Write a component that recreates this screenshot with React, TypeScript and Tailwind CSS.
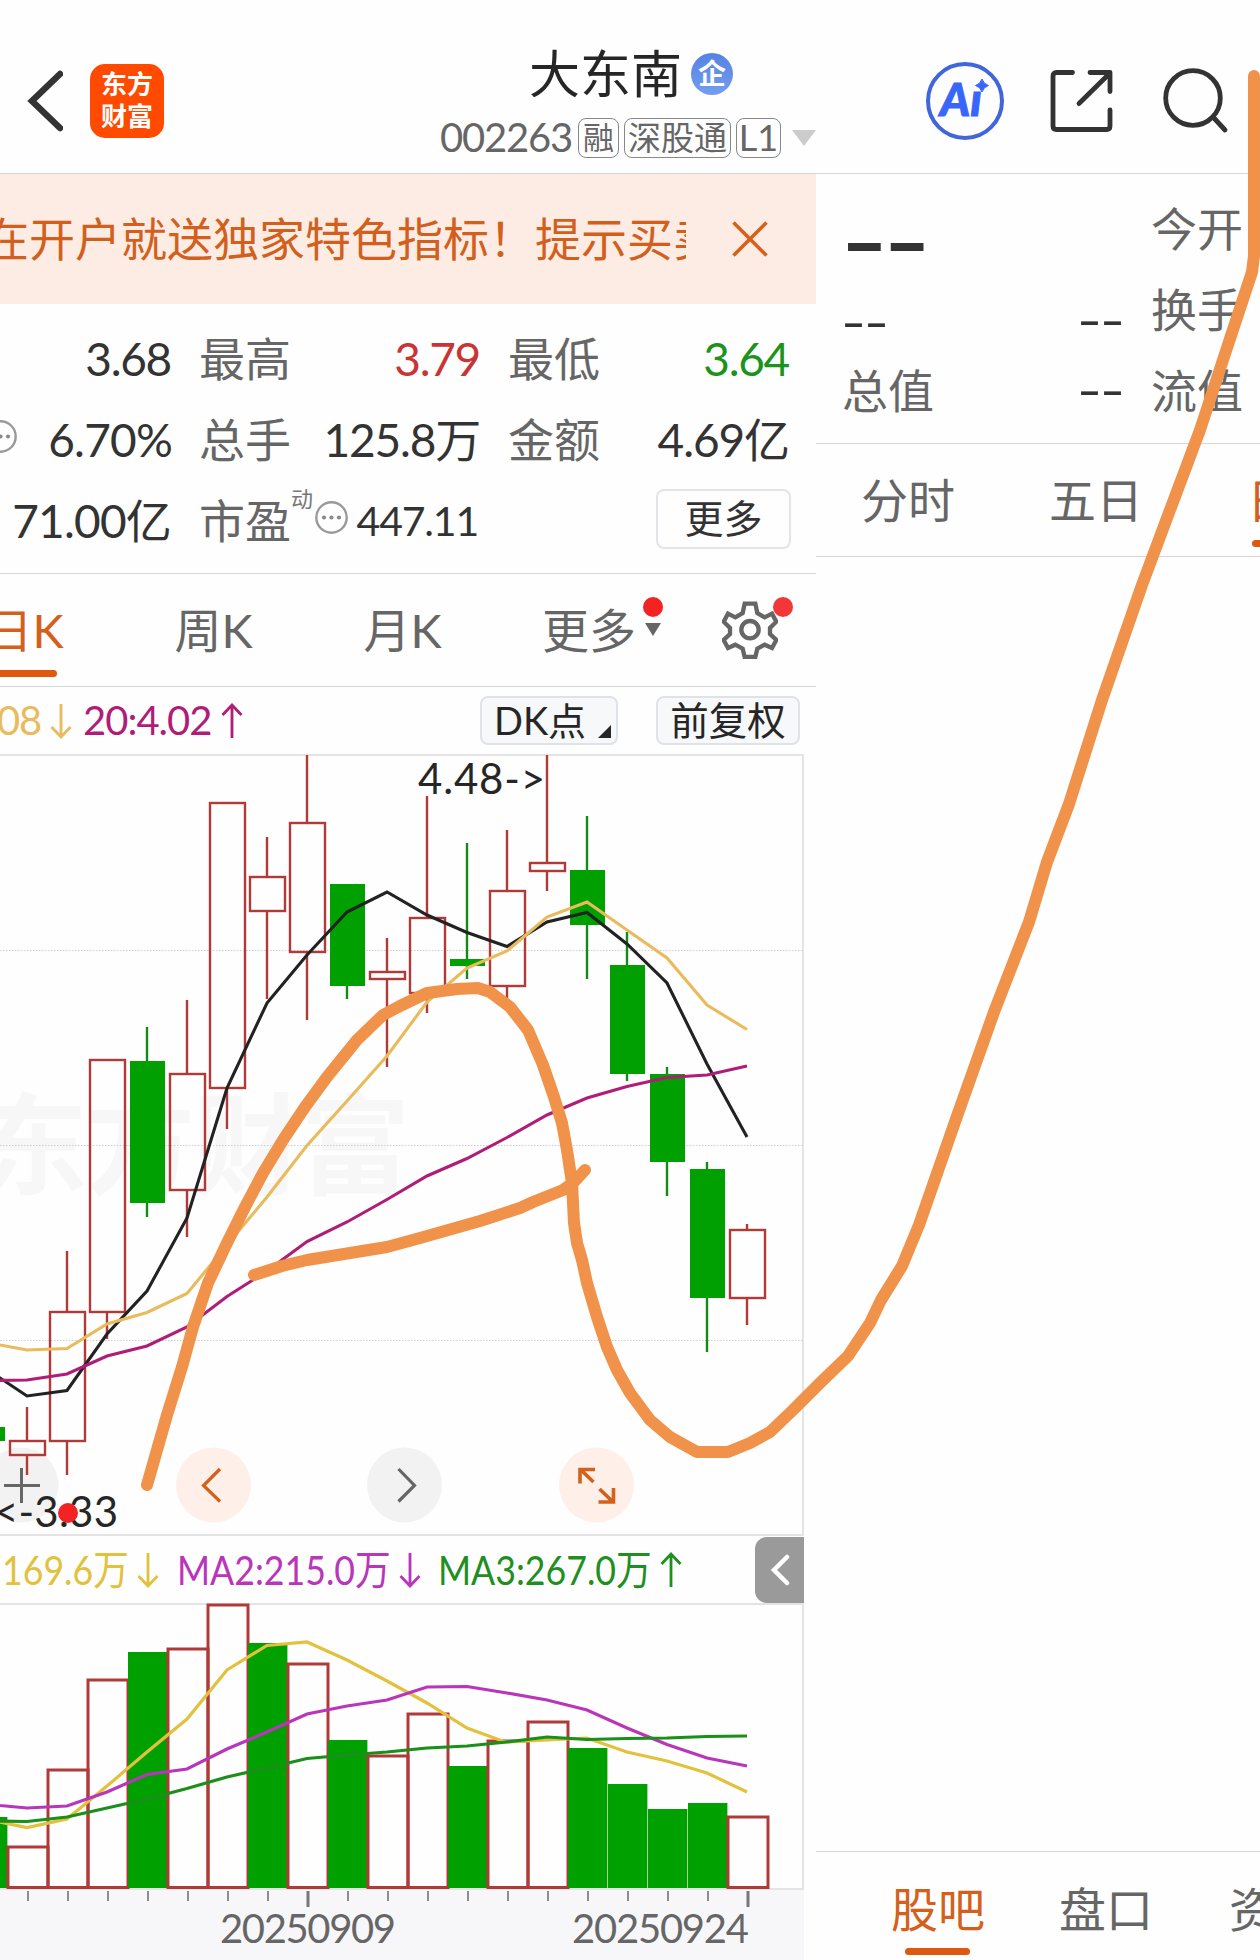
import React from "react";

type Candle = {
  x: number;
  up: boolean;
  high: number;
  top: number;
  bottom: number;
  low: number;
};

const candles: Candle[] = [
  { x: -13, up: false, high: 1427, top: 1427, bottom: 1441, low: 1441 },
  { x: 27, up: true, high: 1407, top: 1441, bottom: 1455, low: 1475 },
  { x: 67, up: true, high: 1251, top: 1312, bottom: 1441, low: 1475 },
  { x: 107, up: true, high: 1060, top: 1060, bottom: 1312, low: 1339 },
  { x: 147, up: false, high: 1027, top: 1061, bottom: 1203, low: 1217 },
  { x: 187, up: true, high: 1000, top: 1074, bottom: 1190, low: 1237 },
  { x: 227, up: true, high: 803, top: 803, bottom: 1088, low: 1129 },
  { x: 267, up: true, high: 837, top: 877, bottom: 911, low: 999 },
  { x: 307, up: true, high: 755, top: 823, bottom: 952, low: 1020 },
  { x: 347, up: false, high: 884, top: 884, bottom: 986, low: 999 },
  { x: 387, up: true, high: 938, top: 972, bottom: 979, low: 1067 },
  { x: 427, up: true, high: 796, top: 918, bottom: 993, low: 1013 },
  { x: 467, up: false, high: 843, top: 959, bottom: 966, low: 979 },
  { x: 507, up: true, high: 830, top: 891, bottom: 986, low: 1000 },
  { x: 547, up: true, high: 755, top: 863, bottom: 871, low: 891 },
  { x: 587, up: false, high: 816, top: 870, bottom: 925, low: 979 },
  { x: 627, up: false, high: 932, top: 965, bottom: 1074, low: 1081 },
  { x: 667, up: false, high: 1067, top: 1074, bottom: 1162, low: 1196 },
  { x: 707, up: false, high: 1162, top: 1169, bottom: 1298, low: 1352 },
  { x: 747, up: true, high: 1224, top: 1230, bottom: 1298, low: 1325 },
];

const ma5 =
  "-13,1370 0,1378 27,1396 67,1390.5 107,1334 147,1291 187,1218 227,1088 267,1003 307,955 347,912 387,892 427,915 467,932.5 507,946.5 547,922 587,912.5 627,944 667,983 707,1064 747,1137";
const ma10 =
  "-13,1342 0,1345 27,1350 67,1348.5 107,1324 147,1312.5 187,1293.5 227,1245 267,1197 307,1145.5 347,1101 387,1056 427,1002 467,968 507,951 547,917 587,902 627,930 667,958 707,1005 747,1029.5";
const ma20 =
  "-13,1380.5 27,1380 67,1374 107,1356 147,1346 187,1327 227,1296.5 267,1271 307,1241.5 347,1222 387,1199.5 427,1176 467,1158.5 507,1137.5 547,1115 587,1098 627,1086.5 667,1077.5 707,1075 747,1066";

const volumes = [
  { x: -13, up: false, top: 1817 },
  { x: 27, up: true, top: 1847 },
  { x: 67, up: true, top: 1770 },
  { x: 107, up: true, top: 1680 },
  { x: 147, up: false, top: 1652 },
  { x: 187, up: true, top: 1649 },
  { x: 227, up: true, top: 1605 },
  { x: 267, up: false, top: 1643 },
  { x: 307, up: true, top: 1664 },
  { x: 347, up: false, top: 1740 },
  { x: 387, up: true, top: 1756 },
  { x: 427, up: true, top: 1714 },
  { x: 467, up: false, top: 1766 },
  { x: 507, up: true, top: 1741 },
  { x: 547, up: true, top: 1722 },
  { x: 587, up: false, top: 1748 },
  { x: 627, up: false, top: 1784 },
  { x: 667, up: false, top: 1809 },
  { x: 707, up: false, top: 1803 },
  { x: 747, up: true, top: 1817 },
];

const vol5 =
  "-13,1819 0,1822 27,1827.5 67,1819 107,1786 147,1752 187,1719 227,1670 267,1645.5 307,1642 347,1660 387,1681 427,1703 467,1728 505,1742 547,1740 587,1738 627,1752 667,1761 707,1773 747,1792";
const vol10 =
  "-13,1804 0,1805.5 27,1808 67,1806 107,1792 147,1774.5 187,1769 227,1749 267,1732 307,1714 347,1706 387,1700 427,1687 467,1686.5 507,1693 547,1700 587,1710 627,1728 667,1744.5 707,1758 747,1766";
const vol20 =
  "-13,1821 27,1821.5 67,1817 107,1808 147,1799 187,1788.5 227,1777 267,1768 307,1758.5 347,1755 387,1752 427,1748 467,1746 507,1742 547,1737 587,1739.5 627,1738.5 667,1738 707,1736.5 747,1736";

const mainStroke =
  "147,1485 167,1415 182,1367 193,1327 208,1283 227,1243 245,1207 263,1173 283,1140 305,1107 327,1077 357,1040 383,1015 400,1006 427,993 457,989 478,988 490,992 510,1007 528,1030 543,1065 554,1097 562,1123 567,1150 572,1183 574,1223 577,1243 582,1260 587,1283 597,1317 607,1347 617,1370 630,1393 650,1420 670,1437 697,1452 728,1452 750,1443 770,1432 793,1410 820,1383 848,1356 870,1323 881,1300 902,1266 919,1225 956,1119 994,1012 1029,922 1047,862 1069,804 1102,700 1142,585 1170,510 1200,430 1222,363 1252,272 1254,256 1254,76";
const trendStroke =
  "254,1275 282,1266 307,1260 387,1247 420,1238 480,1221 520,1208 533,1202 563,1190 573,1183 585,1170";

function Arrow({ up }: { up?: boolean }) {
  return (
    <svg width="22" height="36" viewBox="0 0 22 36" fill="none" stroke="currentColor" strokeWidth="2.800" className="shrink-0">
      {up ? <path d="M11 35V2M1.5 12L11 2l9.5 10" /> : <path d="M11 1v33M1.5 24L11 34l9.5-10" />}
    </svg>
  );
}

function Dots() {
  return (
    <svg width="33" height="33" viewBox="0 0 33 33" className="shrink-0">
      <circle cx="16.5" cy="16.5" r="15.2" fill="none" stroke="#999" strokeWidth="2.400" />
      <g fill="#8a8a8a">
        <circle cx="9" cy="16.5" r="2.1" />
        <circle cx="16.5" cy="16.5" r="2.1" />
        <circle cx="24" cy="16.5" r="2.1" />
      </g>
    </svg>
  );
}

function Header() {
  return (
    <header className="flex h-[174px] shrink-0 border-b border-[#d6d6d6]">
      <svg width="36" height="62" viewBox="0 0 36 62" className="ml-[27px] mt-[70px] shrink-0" fill="none" stroke="#333" strokeWidth="6.500">
        <path d="M33 4L5 31l28 27" strokeLinecap="round" />
      </svg>
      <div className="ml-[27px] mt-[64px] h-[74px] w-[74px] shrink-0 rounded-[15px] bg-[#ff4a00] pt-[4px] text-center text-[26px] font-bold leading-[32px] text-white">
        <div>东方</div>
        <div>财富</div>
      </div>

      <div className="ml-[276px] mt-[40px] w-[378px] shrink-0">
        <div className="flex h-[68px] items-center pl-[89px]">
          <span className="text-[51px] leading-[66px] text-[#262626]">大东南</span>
          <span className="ml-[9px] h-[42px] w-[42px] rounded-full bg-gradient-to-b from-[#5583e3] to-[#749df0] text-center text-[28px] font-bold leading-[41px] text-white">
            企
          </span>
        </div>
        <div className="mt-[9px] flex h-[41px] items-center text-[#666]">
          <span className="w-[138px] text-[40px] leading-[41px] tracking-[-1.2px]">002263</span>
          <span className="h-[40px] w-[41px] rounded-[8px] border-[1.5px] border-[#888] text-center text-[31px] leading-[36px]">融</span>
          <span className="ml-[5px] h-[40px] w-[107px] rounded-[8px] border-[1.5px] border-[#888] text-center text-[33px] leading-[36px]">深股通</span>
          <span className="ml-[5px] h-[40px] w-[45px] rounded-[8px] border-[1.5px] border-[#888] text-center text-[36px] leading-[36px]">L1</span>
          <svg width="24" height="16" className="ml-[11px] shrink-0">
            <path d="M0 0h24L12 16z" fill="#ccc" />
          </svg>
        </div>
      </div>

      <div className="relative ml-[107px] mt-[61px] h-[80px] w-[80px] shrink-0">
        <svg width="80" height="80" className="absolute inset-0">
          <circle cx="40" cy="40" r="37" fill="none" stroke="#4166dc" strokeWidth="4" />
          <path d="M57 18q1.500 5 6.500 6.500q-5 1.500-6.500 6.500q-1.500-5-6.500-6.500q5-1.500 6.500-6.500z" fill="#3866fa" stroke="#3866fa" />
        </svg>
        <span className="absolute left-[15px] top-[12px] text-[46px] font-black italic leading-[52px] text-[#3866fa] [-webkit-text-stroke:1px_#3866fa]">Aı</span>
      </div>
      <svg width="66" height="66" viewBox="0 0 66 66" className="ml-[43px] mt-[68px] shrink-0" fill="none" stroke="#333" strokeWidth="4.800" strokeLinecap="round" strokeLinejoin="round">
        <path d="M24.500 4.500H8.500Q5 4.500 5 8v50q0 3.500 3.500 3.500h50q3.500 0 3.500-3.500V42M42 4.500h20v19M61 6L31 35.500" />
      </svg>
      <svg width="70" height="70" viewBox="0 0 70 70" className="ml-[46px] mt-[66px] shrink-0" fill="none" stroke="#333" strokeWidth="4.800" strokeLinecap="round">
        <circle cx="33" cy="32" r="27.300" />
        <path d="M53 51l12 13" />
      </svg>
    </header>
  );
}

function Stats() {
  return (
    <section className="h-[270px] shrink-0 border-b border-[#d6d6d6] pt-[14px] text-[46px] leading-[81px] text-[#333]">
      <div className="flex h-[81px] whitespace-nowrap">
        <span className="w-[171px] text-right tracking-[-1.3px]">3.68</span>
        <span className="ml-[28px] text-[#666]">最高</span>
        <span className="w-[189px] text-right tracking-[-1.3px] text-[#c93434]">3.79</span>
        <span className="ml-[28px] text-[#666]">最低</span>
        <span className="w-[189px] text-right tracking-[-1.3px] text-[#1c931c]">3.64</span>
      </div>
      <div className="flex h-[81px] whitespace-nowrap">
        <span className="-ml-[16px] mt-[21px] w-[33px]">
          <Dots />
        </span>
        <span className="w-[155px] text-right tracking-[-0.8px]">6.70%</span>
        <span className="ml-[27px] text-[#666]">总手</span>
        <span className="w-[189px] text-right tracking-[-1.2px]">125.8万</span>
        <span className="ml-[28px] text-[#666]">金额</span>
        <span className="w-[189px] text-right tracking-[-1.1px]">4.69亿</span>
      </div>
      <div className="flex h-[81px] whitespace-nowrap">
        <span className="w-[171px] text-right tracking-[-0.8px]">71.00亿</span>
        <span className="ml-[28px] text-[#666]">市盈</span>
        <span className="-mt-[22px] w-[24px] text-[22px] text-[#777]">动</span>
        <span className="mt-[21px] w-[33px]">
          <Dots />
        </span>
        <span className="w-[130px] text-right text-[41px] tracking-[-1.2px]">447.11</span>
        <span className="ml-[178px] mt-[9px] h-[60px] w-[135px] rounded-[8px] border-2 border-[#e3e4e8] text-center text-[39px] leading-[54px]">
          更多
        </span>
      </div>
    </section>
  );
}

function PeriodTabs() {
  return (
    <nav className="flex h-[113px] shrink-0 border-b border-[#d6d6d6] text-[47px] leading-[113px] text-[#666]">
      <div className="relative -ml-[70px] w-[189px] shrink-0 text-center text-[#d4601c]">
        日K
        <span className="absolute left-[62px] top-[96px] h-[7px] w-[65px] rounded-full bg-[#de590f]" />
      </div>
      <div className="w-[189px] shrink-0 text-center">周K</div>
      <div className="w-[189px] shrink-0 text-center">月K</div>
      <div className="relative w-[189px] shrink-0 pl-[45px]">
        更多
        <span className="absolute left-[146px] top-[23px] h-[20px] w-[20px] rounded-full bg-[#f32323]" />
        <svg width="16" height="13" className="absolute left-[148px] top-[49px]">
          <path d="M0 0h16L8 13z" fill="#666" />
        </svg>
      </div>
      <div className="relative w-[130px]">
        <svg width="56" height="58" viewBox="906 904 168 174" className="absolute left-[36px] top-[27px]" fill="none" stroke="#666" strokeWidth="13">
          <path d="M974 912h32l6 28 22 13 22-11 13 24-19 19v18l19 18-13 24-22-10-22 12-6 25h-32l-6-25-22-12-22 10-13-24 19-18v-18l-19-19 13-24 22 11 22-13z" />
          <circle cx="990" cy="990" r="26" />
        </svg>
        <span className="absolute left-[87px] top-[23px] h-[20px] w-[20px] rounded-full bg-[#f33636]" />
      </div>
    </nav>
  );
}

function PriceLegend() {
  return (
    <div className="flex h-[67px] shrink-0 items-center text-[40px] leading-[67px]">
      <span className="flex items-center text-[#e9bb5c]">
        <span className="-ml-[3px] w-[53px] tracking-[-1.2px]">08</span>
        <Arrow />
      </span>
      <span className="ml-[11px] flex items-center text-[#b01d78]">
        <span className="w-[138px] tracking-[-1px]">20:4.02</span>
        <Arrow up />
      </span>
      <span className="relative ml-[237px] h-[49px] w-[138px] rounded-[8px] border-2 border-[#dfe2e6] bg-[#f7f8fa] pl-[12px] text-[38px] leading-[45px] text-[#262626]">
        DK点
        <svg width="13" height="13" className="absolute bottom-[5px] right-[5px]">
          <path d="M13 0v13H0z" fill="#262626" />
        </svg>
      </span>
      <span className="ml-[38px] h-[49px] w-[144px] rounded-[8px] border-2 border-[#dfe2e6] bg-[#f7f8fa] text-center text-[38.500px] leading-[44px] text-[#262626]">
        前复权
      </span>
    </div>
  );
}

function PriceChart() {
  return (
    <svg width="804" height="782" viewBox="0 754 804 782" className="block shrink-0">
      <text x="-22" y="1186" fontSize="110" fontWeight="700" fill="#f7f7f7" textLength="432">东方财富</text>
      <path d="M0 755h803v780H0" fill="none" stroke="#e4e4e4" strokeWidth="2" />
      <path d="M0 950.500h804M0 1145.500h804M0 1340.500h804" stroke="#cfcfcf" strokeDasharray="1.500 1.500" />

      <circle cx="21" cy="1485" r="37.500" fill="#f2f2f2" />
      <path d="M4 1485.500h36M21.500 1468v35" stroke="#666" strokeWidth="3" />
      <circle cx="213.500" cy="1485" r="37.500" fill="#fef0e8" />
      <path d="M220 1469l-16.500 16.500 16.500 16" fill="none" stroke="#d4601c" strokeWidth="3.200" />
      <circle cx="404.500" cy="1485" r="37.500" fill="#f2f2f2" />
      <path d="M398.500 1469l16 16.500-16 16" fill="none" stroke="#666" strokeWidth="3.200" />
      <circle cx="596.500" cy="1485" r="37.500" fill="#fef0e8" />
      <path d="M580 1483.500v-14h15M581 1470l12.500 12M598.500 1502h15v-14M612 1501l-12.500-12" fill="none" stroke="#d4601c" strokeWidth="3.600" />

      {candles.map((c) => (
        <g key={c.x}>
          {c.up ? (
            <>
              <path d={`M${c.x} ${c.high}V${c.top}M${c.x} ${c.bottom}V${c.low}`} stroke="#b03a38" strokeWidth="2.400" />
              <rect x={c.x - 17} y={c.top} width="35" height={c.bottom - c.top} fill="none" stroke="#b03a38" strokeWidth="2.400" />
            </>
          ) : (
            <>
              <path d={`M${c.x} ${c.high}V${c.low}`} stroke="#158a15" strokeWidth="2.400" />
              <rect x={c.x - 17} y={c.top} width="35" height={c.bottom - c.top} fill="#00a000" />
            </>
          )}
        </g>
      ))}

      <g fill="none" strokeWidth="3.100">
        <polyline points={ma5} stroke="#222" />
        <polyline points={ma10} stroke="#e9bb5c" />
        <polyline points={ma20} stroke="#b01d78" />
      </g>

      <g fontSize="42" fill="#262626">
        <text x="418" y="794" textLength="127">4.48-&gt;</text>
        <text x="-6" y="1527" textLength="124">&lt;-3.33</text>
      </g>
      <circle cx="68" cy="1513" r="10" fill="#f32323" />
    </svg>
  );
}

function VolumeLegend() {
  return (
    <div className="flex h-[67px] w-[804px] shrink-0 items-center whitespace-nowrap text-[41px] leading-[66px]">
      <span className="ml-[2px] w-[135px] text-[#e2c13c]">
        <span className="inline-block origin-left scale-x-[0.87]">169.6万</span>
      </span>
      <span className="text-[#e2c13c]">
        <Arrow />
      </span>
      <span className="ml-[18px] w-[222px] text-[#b936ba]">
        <span className="inline-block origin-left scale-x-[0.87]">MA2:215.0万</span>
      </span>
      <span className="text-[#b936ba]">
        <Arrow />
      </span>
      <span className="ml-[17px] w-[222px] text-[#1f8f1f]">
        <span className="inline-block origin-left scale-x-[0.87]">MA3:267.0万</span>
      </span>
      <span className="text-[#1f8f1f]">
        <Arrow up />
      </span>
      <span className="ml-auto flex h-[66px] w-[49px] items-center justify-center rounded-l-[12px] bg-[#9a9a9a]">
        <svg width="20" height="32" viewBox="0 0 20 32" fill="none" stroke="#fff" strokeWidth="4.500" strokeLinecap="round">
          <path d="M17 3L4 16l13 13" />
        </svg>
      </span>
    </div>
  );
}

function VolumeChart() {
  return (
    <svg width="804" height="357" viewBox="0 1603 804 357" className="block shrink-0">
      <rect x="0" y="1890" width="804" height="70" fill="#f7f7fa" />
      <path d="M0 1604h803v285H0" fill="none" stroke="#e4e4e4" strokeWidth="2" />
      {volumes.map((v) =>
        v.up ? (
          <rect key={v.x} x={v.x - 19} y={v.top} width="40" height={1887.5 - v.top} fill="none" stroke="#b03a38" strokeWidth="3" />
        ) : (
          <rect key={v.x} x={v.x - 19} y={v.top} width="39.400" height={1888 - v.top} fill="#00a000" />
        )
      )}
      <g fill="none" strokeWidth="3.200">
        <polyline points={vol5} stroke="#e2c13c" />
        <polyline points={vol10} stroke="#b936ba" />
        <polyline points={vol20} stroke="#1a8f1a" />
      </g>
      {volumes.slice(1).map((v) => {
        const major = v.x === 307 || v.x === 747;
        return (
          <rect key={v.x} x={major ? v.x - 0.5 : v.x} y="1891" width={major ? 3 : 2} height={major ? 16 : 10} fill={major ? "#777" : "#8c8c8c"} />
        );
      })}
      <g fontSize="40" fill="#666">
        <text x="220" y="1943" textLength="176">20250909</text>
        <text x="572" y="1943" textLength="177">20250924</text>
      </g>
    </svg>
  );
}

function NextStock() {
  return (
    <aside className="flex w-[444px] shrink-0 flex-col overflow-hidden text-[46px] text-[#666]">
      <section className="flex h-[270px] shrink-0 whitespace-nowrap border-b border-[#d6d6d6] pt-[14px] leading-[81px]">
        <div className="w-[262px] pl-[27px]">
          <div className="h-[81px] pt-[13px]">
            <span className="inline-block origin-left scale-x-[1.95] font-['Liberation_Sans'] text-[66px] font-bold leading-[81px] text-[#333]">--</span>
          </div>
          <div className="-ml-px h-[81px] pt-[11px]">
            <span className="inline-block origin-left scale-x-150 font-['Liberation_Sans'] text-[46px] leading-[81px] text-[#333]">--</span>
          </div>
          <div className="-ml-px h-[81px]">总值</div>
        </div>
        <div className="w-[73px] pt-[81px] font-['Liberation_Sans'] text-[#333]">
          <div className="h-[81px] pt-[11px]">
            <span className="inline-block origin-left scale-x-150">--</span>
          </div>
          <div className="h-[81px]">
            <span className="inline-block origin-left scale-x-150">--</span>
          </div>
        </div>
        <div>
          <div className="h-[81px]">今开</div>
          <div className="h-[81px]">换手</div>
          <div className="h-[81px]">流值</div>
        </div>
      </section>

      <nav className="flex h-[113px] shrink-0 border-b border-[#d6d6d6] text-[47px] leading-[112px]">
        <div className="w-[187px] shrink-0 pl-[45px]">分时</div>
        <div className="w-[189px] shrink-0 pl-[46px]">五日</div>
        <div className="relative w-[189px] shrink-0 pl-[55px] text-[#d4601c]">
          日K
          <span className="absolute left-[60px] top-[96px] h-[7px] w-[65px] rounded-full bg-[#de590f]" />
        </div>
      </nav>

      <div className="flex-1" />

      <nav className="flex h-[109px] shrink-0 whitespace-nowrap border-t border-[#d6d6d6] text-[47px] leading-[114px]">
        <div className="relative ml-[37px] w-[169px] shrink-0 pl-[38px] text-[#d4601c]">
          股吧
          <span className="absolute left-[52px] top-[96px] h-[7px] w-[65px] rounded-full bg-[#de590f]" />
        </div>
        <div className="w-[169px] shrink-0 pl-[37px]">盘口</div>
        <div className="shrink-0 pl-[38px]">资金</div>
      </nav>
    </aside>
  );
}

export default function App() {
  return (
    <div className="relative flex h-[1960px] w-[1260px] flex-col overflow-hidden bg-[#fefefe] font-[Lato,'Noto_Sans_CJK_SC',sans-serif]">
      <Header />

      <main className="flex flex-1">
        <div className="flex w-[816px] shrink-0 flex-col overflow-hidden">
          <div className="flex h-[130px] shrink-0 items-center bg-[#fcece4] text-[46px] text-[#d2601c]">
            <div className="w-[686px] overflow-hidden whitespace-nowrap leading-[130px]">
              <span className="-ml-[17px]">在开户就送独家特色指标！提示买卖</span>
            </div>
            <svg width="36" height="36" viewBox="0 0 36 36" className="ml-[46px]" stroke="#d9601a" strokeWidth="3.600">
              <path d="M1.500 1.500l33 33M34.500 1.500l-33 33" />
            </svg>
          </div>
          <Stats />
          <PeriodTabs />
          <PriceLegend />
          <PriceChart />
          <VolumeLegend />
          <VolumeChart />
        </div>
        <NextStock />
      </main>

      {/* freehand marks over the whole screen */}
      <svg width="1260" height="1960" className="pointer-events-none absolute inset-0" fill="none" stroke="#f0924a" strokeWidth="12" strokeLinecap="round" strokeLinejoin="round">
        <polyline points={mainStroke} />
        <polyline points={trendStroke} />
      </svg>
    </div>
  );
}
